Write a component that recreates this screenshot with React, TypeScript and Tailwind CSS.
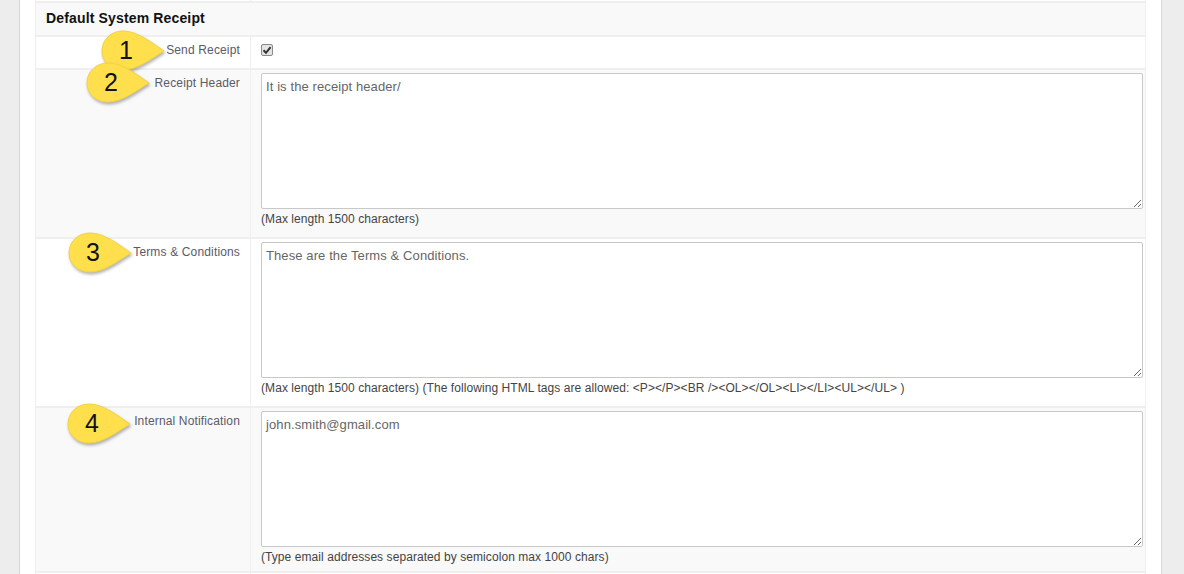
const FONT = "font-['Liberation_Sans',Arial,sans-serif]";

function Callout({ n, className }: { n: number; className: string }) {
  return (
    <div className={`absolute h-[42px] w-[64px] ${className}`}>
      <svg width="64" height="42" viewBox="0 0 64 42" className="absolute left-0 top-0 overflow-visible">
        <path
          d="M1 21C1 9.5 10 1 22 1C36 1 50 12 63 21C50 29 36 40 22 40C10 40 1 32 1 21Z"
          fill="#ffe04c"
          stroke="#f2d244"
          strokeWidth="1"
          style={{ filter: "drop-shadow(1px 2px 1.5px rgba(0,0,0,0.3))" }}
        />
      </svg>
      <span className="absolute left-[13px] top-[5px] w-[24px] text-center text-[25px] leading-[30px] text-[#111]">
        {n}
      </span>
    </div>
  );
}

function Row({
  label,
  shaded,
  height,
  callout,
  children,
}: {
  label: string;
  shaded?: boolean;
  height: string;
  callout: React.ReactNode;
  children: React.ReactNode;
}) {
  return (
    <div className={`flex border-b-2 border-[#efefef] ${height} ${shaded ? "bg-[#f9f9f9]" : "bg-white"}`}>
      <div className="relative w-[215px] shrink-0 border-r border-[#efefef] pr-[10px] pt-[5px] text-right text-[12px] leading-[16px] tracking-[0.15px] text-[#5a5a6a]">
        {label}
        {callout}
      </div>
      <div className="min-w-0 flex-1 pl-[10px] pr-[2px] pt-[3px]">{children}</div>
    </div>
  );
}

function TextField({ value, note }: { value: string; note: string }) {
  return (
    <>
      <textarea
        readOnly
        defaultValue={value}
        className="block h-[136px] w-full resize-y rounded-[2px] border border-[#c8c8c8] bg-white px-[4px] py-[5px] text-[13px] leading-[16px] tracking-[0.1px] text-[#666] outline-none"
      />
      <p className="mt-[2px] text-[12px] leading-[16px] tracking-[0.07px] text-[#444]">{note}</p>
    </>
  );
}

export default function App() {
  return (
    <div className={`flex h-[574px] w-[1184px] overflow-hidden bg-[#ededed] ${FONT}`}>
      <div className="ml-[19px] w-[1143px] border-x border-[#d8d8d8] bg-white px-[15px]">
        <div className="h-[574px] w-[1111px] border-x border-[#efefef]">
          <div className="flex h-[3px] border-b-2 border-[#efefef]">
            <div className="w-[215px] border-r border-[#efefef]" />
          </div>
          <div className="flex h-[34px] items-center border-b-2 border-[#efefef] bg-[#f9f9f9] pb-[2px] pl-[10px] text-[14px] font-bold tracking-[0.15px] text-[#111]">
            Default System Receipt
          </div>
          <Row label="Send Receipt" height="h-[33px]" callout={<Callout n={1} className="left-[65px] top-[-7px]" />}>
            <span className="mt-[4px] flex h-[12px] w-[12px] items-center justify-center rounded-[2px] border border-[#8a8a8a] bg-[#e4e4e4]">
              <svg width="10" height="10" viewBox="0 0 10 10">
                <path d="M1.5 5.2L4 7.8L8.6 2.2" fill="none" stroke="#333" strokeWidth="2" />
              </svg>
            </span>
          </Row>
          <Row
            label="Receipt Header"
            shaded
            height="h-[169px]"
            callout={<Callout n={2} className="left-[50px] top-[-8px]" />}
          >
            <TextField value="It is the receipt header/" note="(Max length 1500 characters)" />
          </Row>
          <Row
            label="Terms & Conditions"
            height="h-[169px]"
            callout={<Callout n={3} className="left-[32px] top-[-7px]" />}
          >
            <TextField
              value="These are the Terms & Conditions."
              note="(Max length 1500 characters) (The following HTML tags are allowed: <P></P><BR /><OL></OL><LI></LI><UL></UL> )"
            />
          </Row>
          <Row
            label="Internal Notification"
            shaded
            height="h-[165px]"
            callout={<Callout n={4} className="left-[31px] top-[-5px]" />}
          >
            <TextField value="john.smith@gmail.com" note="(Type email addresses separated by semicolon max 1000 chars)" />
          </Row>
          <div className="flex h-[3px]">
            <div className="w-[215px] border-r border-[#efefef]" />
          </div>
        </div>
      </div>
    </div>
  );
}
